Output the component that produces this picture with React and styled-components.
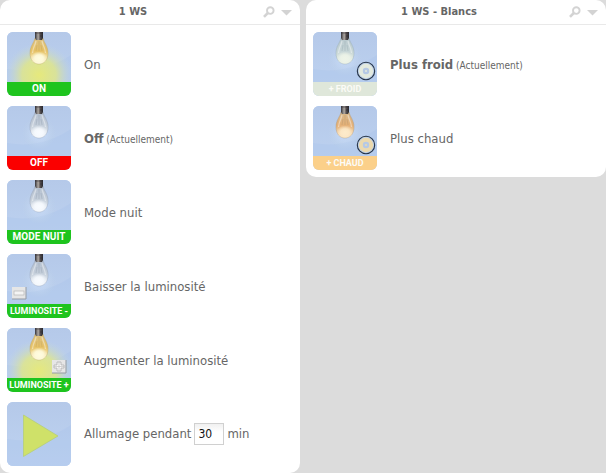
import React, { useState } from "react";
import styled, { createGlobalStyle } from "styled-components";

const GlobalStyle = createGlobalStyle`
  * { box-sizing: border-box; }
  body {
    margin: 0;
    background: #dcdcdc;
    color: #666;
    font-family: "DejaVu Sans Condensed", "Noto Sans", sans-serif;
    font-size: 13px;
  }
`;

const Board = styled.main`
  display: grid;
  grid-template-columns: 1fr 1fr;
  align-items: start;
  gap: 6px;
`;

const Panel = styled.section`
  background: #fff;
  border-radius: 10px;
`;

const PanelHeader = styled.header`
  display: flex;
  align-items: center;
  gap: 1px;
  height: 25px;
  padding: 0 6px;
  border-bottom: 1px solid #e9e9e9;
`;

const Title = styled.h2`
  flex: 1;
  margin: 0;
  font-size: 11px;
  line-height: 24px;
  text-align: center;
`;

const IconButton = styled.button`
  display: flex;
  margin: 0;
  padding: 0 2px;
  border: 0;
  background: none;
  color: #d3d3d3;
  cursor: pointer;
`;

const Commands = styled.ul`
  display: grid;
  gap: 10px;
  margin: 0;
  padding: 7px;
  list-style: none;
`;

const Command = styled.li`
  display: flex;
  align-items: center;
  gap: 13px;
`;

const Tile = styled.button`
  display: flex;
  flex: none;
  flex-direction: column;
  width: 64px;
  height: 64px;
  margin: 0;
  padding: 0;
  border: 0;
  border-radius: 6px;
  overflow: hidden;
  background: #b4cdf0;
  cursor: pointer;

  svg { display: block; flex: none; }
`;

const Caption = styled.span`
  width: 100%;
  height: 14px;
  background: ${(p) => p.$color};
  color: ${(p) => (p.$faded ? "#fbfbf6" : "#fff")};
  font: bold ${(p) => (p.$large ? 10 : 9)}px/14px Roboto, sans-serif;
  text-align: center;
  white-space: nowrap;
`;

const Label = styled.span`
  padding-top: 2px;
  font-weight: ${(p) => (p.$current ? "bold" : "normal")};
  line-height: 20px;
`;

const State = styled.small`
  font-size: 10px;
  font-weight: normal;
`;

const DelayLabel = styled.label`
  display: flex;
  align-items: center;
  gap: 3px;
  line-height: 20px;
`;

const Minutes = styled.input`
  width: 30px;
  height: 22px;
  padding: 0 3px;
  border: 1px solid #d0d0d0;
  background: linear-gradient(#f0f0f0, #fff 8px);
  color: #111;
  font: 12px "DejaVu Sans Condensed", sans-serif;
`;

const bulbs = {
  on: { top: "#dcc182", mid: "#e6c266", edge: "#b79a5e", core: "#fffce0" },
  off: { top: "#b3bfcf", mid: "#c3cdd9", edge: "#8996a8", core: "#f8fbff" },
  cold: { top: "#b9c9ce", mid: "#c6d5d6", edge: "#8fa2a9", core: "#eef4e8" },
  warm: { top: "#d8b98c", mid: "#e4b077", edge: "#a98c68", core: "#fdebcb" },
};

function Sky({ id }) {
  return (
    <>
      <defs>
        <linearGradient id={`${id}-sky`} x1="0" y1="0" x2="0" y2="1">
          <stop offset="0" stopColor="#b5c9e9" />
          <stop offset="1" stopColor="#bed3f1" />
        </linearGradient>
      </defs>
      <rect width="64" height="64" fill={`url(#${id}-sky)`} />
      <path d="M0 37 Q34 43 64 23 V64 H0Z" fill="#a8c4ea" opacity=".35" />
    </>
  );
}

function BulbArt({ id, kind, sign, ring }) {
  const c = bulbs[kind];
  return (
    <svg width="64" height="50" viewBox="0 0 64 50" aria-hidden="true">
      <Sky id={id} />
      <defs>
        <radialGradient id={`${id}-glow`}>
          <stop offset="0" stopColor={kind === "on" ? "#e6e97c" : "#e5f1ff"} />
          <stop offset=".5" stopColor={kind === "on" ? "#dfe68c" : "#d0e2fa"} stopOpacity=".85" />
          <stop offset="1" stopColor="#c5d7df" stopOpacity="0" />
        </radialGradient>
        <linearGradient id={`${id}-glass`} x1="0" y1="0" x2="0" y2="1">
          <stop offset="0" stopColor={c.top} />
          <stop offset=".5" stopColor={c.mid} />
          <stop offset="1" stopColor={c.core} />
        </linearGradient>
        <radialGradient id={`${id}-core`}>
          <stop offset="0" stopColor={c.core} />
          <stop offset=".5" stopColor={c.core} stopOpacity=".85" />
          <stop offset="1" stopColor={c.core} stopOpacity="0" />
        </radialGradient>
        <linearGradient id={`${id}-cap`}>
          <stop offset="0" stopColor="#34333a" />
          <stop offset=".4" stopColor="#b0aaa5" />
          <stop offset=".65" stopColor="#565050" />
          <stop offset="1" stopColor="#28282e" />
        </linearGradient>
      </defs>
      {kind === "on" ? (
        <ellipse cx="32" cy="43" rx="34" ry="32" fill={`url(#${id}-glow)`} />
      ) : (
        <circle cx="32" cy="27" r="17" fill={`url(#${id}-glow)`} opacity=".35" />
      )}
      <path
        d="M28 6 C27 11 23 14 23 21 C23 28 27 32 32 32 C37 32 41 28 41 21 C41 14 37 11 36 6Z"
        fill={`url(#${id}-glass)`}
        stroke={c.edge}
        strokeWidth=".7"
        strokeOpacity=".5"
      />
      <path d="M29 9 C28 14 26 15 25.500 21 M35 9 C36 14 38 15 38.500 21" fill="none" stroke="#fff" strokeOpacity=".4" strokeWidth="1.300" />
      <path d="M32 9 V19 M30 13 L29 19 M34 13 L35 19" stroke={c.edge} strokeWidth=".7" opacity=".45" />
      <ellipse cx="32" cy="26" rx="8.500" ry="6.500" fill={`url(#${id}-core)`} />
      <path d="M28 0 H36 V6 L35 8 H29 L28 6Z" fill={`url(#${id}-cap)`} />
      <path d="M28 1 H36 M33 4 H36" stroke="#2b2a31" strokeWidth=".8" opacity=".7" />
      {sign === "minus" && (
        <g>
          <rect x="5" y="33" width="14" height="12" fill="#e6e6e6" />
          <path d="M5 45 H19 V33" fill="none" stroke="#949ba4" />
          <rect x="7" y="37" width="10" height="4" fill="#f4f4f4" stroke="#b6b6b6" strokeWidth=".7" />
        </g>
      )}
      {sign === "plus" && (
        <g>
          <rect x="45" y="32" width="14" height="13" fill="#e6e6e6" />
          <path d="M45 45 H59 V32" fill="none" stroke="#949ba4" />
          <path d="M50 34 h4 v3 h3 v3 h-3 v3 h-4 v-3 h-3 v-3 h3z" fill="#f8f8f8" stroke="#aaa" strokeWidth=".7" />
          <path d="M52 34 V43 M47 38.500 H57" stroke="#bbb" strokeWidth=".6" />
        </g>
      )}
      {ring && (
        <g>
          <circle cx="53" cy="39" r="8.7" fill="#bdcfe5" stroke="#263448" strokeWidth="1.1" />
          <circle cx="53" cy="39" r="5.2" fill="#b7cbea" stroke={ring} strokeWidth="4" />
          <circle cx="53" cy="39" r="3" fill="#b6c9e4" />
          <circle cx="53" cy="39" r="1" fill={ring} />
        </g>
      )}
    </svg>
  );
}

function PlayArt() {
  return (
    <svg width="64" height="64" viewBox="0 0 64 64" aria-hidden="true">
      <Sky id="play" />
      <path d="M16.5 13 L51 34 L16.5 54.500Z" fill="#cfe169" stroke="#b5ce78" strokeWidth=".8" />
    </svg>
  );
}

function PanelTop({ title }) {
  return (
    <PanelHeader>
      <Title>{title}</Title>
      <IconButton type="button" aria-label="Rechercher">
        <svg width="12" height="12" viewBox="0 0 12 12" fill="none" stroke="currentColor" aria-hidden="true">
          <circle cx="7.300" cy="4.600" r="3.300" strokeWidth="1.900" />
          <path d="M4.800 7 L1 10.800" strokeWidth="2.600" />
        </svg>
      </IconButton>
      <IconButton type="button" aria-label="Menu">
        <svg width="12" height="12" viewBox="0 0 12 12" aria-hidden="true">
          <path d="M1 4 H12 L6.500 9.500Z" fill="currentColor" />
        </svg>
      </IconButton>
    </PanelHeader>
  );
}

const mainCommands = [
  { id: "on", kind: "on", caption: "ON", large: true, color: "#1ec41e", label: "On" },
  { id: "off", kind: "off", caption: "OFF", large: true, color: "#fb0000", label: "Off", current: true },
  { id: "night", kind: "off", caption: "MODE NUIT", large: true, color: "#1ec41e", label: "Mode nuit" },
  { id: "dim", kind: "off", sign: "minus", caption: "LUMINOSITE -", color: "#1ec41e", label: "Baisser la luminosité" },
  { id: "bright", kind: "on", sign: "plus", caption: "LUMINOSITE +", color: "#1ec41e", label: "Augmenter la luminosité" },
];

const whiteCommands = [
  { id: "cold", kind: "cold", ring: "#e3eadf", caption: "+ FROID", color: "#dfe7da", faded: true, label: "Plus froid", current: true },
  { id: "warm", kind: "warm", ring: "#ebd9ae", caption: "+ CHAUD", color: "#fbd08a", faded: true, label: "Plus chaud" },
];

function CommandRow({ command }) {
  const { id, kind, sign, ring, caption, large, color, faded, label, current } = command;
  return (
    <Command>
      <Tile type="button" aria-labelledby={`${id}-label`}>
        <BulbArt id={id} kind={kind} sign={sign} ring={ring} />
        <Caption $color={color} $faded={faded} $large={large}>{caption}</Caption>
      </Tile>
      <Label id={`${id}-label`} $current={current}>
        {label}
        {current && <State> (Actuellement)</State>}
      </Label>
    </Command>
  );
}

export default function App() {
  const [minutes, setMinutes] = useState("30");
  return (
    <>
      <GlobalStyle />
      <Board>
        <Panel>
          <PanelTop title="1 WS" />
          <Commands>
            {mainCommands.map((c) => <CommandRow key={c.id} command={c} />)}
            <Command>
              <Tile type="button" aria-label="Allumage pendant"><PlayArt /></Tile>
              <DelayLabel>
                Allumage pendant
                <Minutes value={minutes} onChange={(e) => setMinutes(e.target.value)} />
                min
              </DelayLabel>
            </Command>
          </Commands>
        </Panel>
        <Panel>
          <PanelTop title="1 WS - Blancs" />
          <Commands>
            {whiteCommands.map((c) => <CommandRow key={c.id} command={c} />)}
          </Commands>
        </Panel>
      </Board>
    </>
  );
}
